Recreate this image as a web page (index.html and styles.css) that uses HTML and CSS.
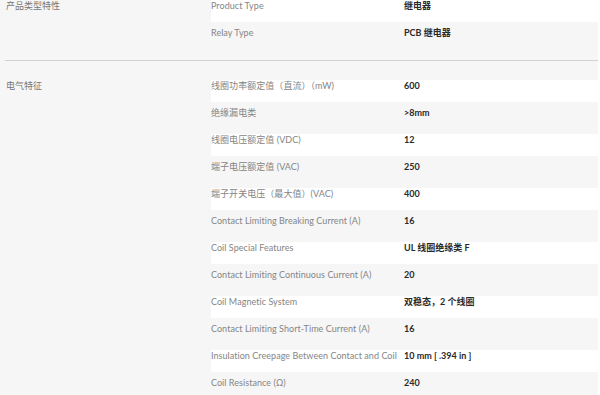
FILE: index.html
```html
<!DOCTYPE html>
<html lang="zh-CN">
<head>
<meta charset="utf-8">
<title>Specs</title>
<link rel="stylesheet" href="styles.css">
</head>
<body>
<div class="spec">
  <section class="group group-first">
    <div class="group-title">产品类型特性</div>
    <div class="rows">
      <div class="row"><div class="label">Product Type</div><div class="value">继电器</div></div>
      <div class="row"><div class="label">Relay Type</div><div class="value">PCB 继电器</div></div>
    </div>
  </section>
  <section class="group">
    <div class="group-title">电气特征</div>
    <div class="rows">
      <div class="row"><div class="label">线圈功率额定值（直流）（mW)</div><div class="value">600</div></div>
      <div class="row"><div class="label">绝缘漏电类</div><div class="value">&gt;8mm</div></div>
      <div class="row"><div class="label">线圈电压额定值 (VDC)</div><div class="value">12</div></div>
      <div class="row"><div class="label">端子电压额定值 (VAC)</div><div class="value">250</div></div>
      <div class="row"><div class="label">端子开关电压（最大值）(VAC)</div><div class="value">400</div></div>
      <div class="row"><div class="label">Contact Limiting Breaking Current (A)</div><div class="value">16</div></div>
      <div class="row"><div class="label">Coil Special Features</div><div class="value">UL 线圈绝缘类 F</div></div>
      <div class="row"><div class="label">Contact Limiting Continuous Current (A)</div><div class="value">20</div></div>
      <div class="row"><div class="label">Coil Magnetic System</div><div class="value">双稳态，2 个线圈</div></div>
      <div class="row"><div class="label">Contact Limiting Short-Time Current (A)</div><div class="value">16</div></div>
      <div class="row"><div class="label">Insulation Creepage Between Contact and Coil</div><div class="value">10 mm [ .394 in ]</div></div>
      <div class="row"><div class="label">Coil Resistance (Ω)</div><div class="value">240</div></div>
    </div>
  </section>
</div>
</body>
</html>
```
FILE: styles.css
```css
html, body {
  margin: 0;
  padding: 0;
  background: #ffffff;
}
body {
  font-family: Lato, "Noto Sans CJK SC", sans-serif;
  font-size: 9px;
  line-height: 12px;
}
.spec {
  width: 598px;
  background: #f6f6f6;
}
.group {
  display: flex;
  margin-left: 5px;
  padding: 19px 0 10px;
}
.group-first {
  padding-top: 0;
  border-bottom: 1px solid #d2d2d2;
  padding-bottom: 11px;
}
.group-title {
  width: 205px;
  padding-left: 1px;
  color: #777777;
}
.rows {
  flex: 1;
  display: flex;
  flex-direction: column;
  gap: 5px;
}
.row {
  display: flex;
  height: 22px;
  box-sizing: border-box;
}
.row:nth-child(odd) {
  background: #ffffff;
}
.label {
  width: 193px;
  color: #858585;
  white-space: nowrap;
  letter-spacing: 0.05px;
}
.value {
  color: #2a2a2a;
  font-weight: bold;
  white-space: nowrap;
}
```
